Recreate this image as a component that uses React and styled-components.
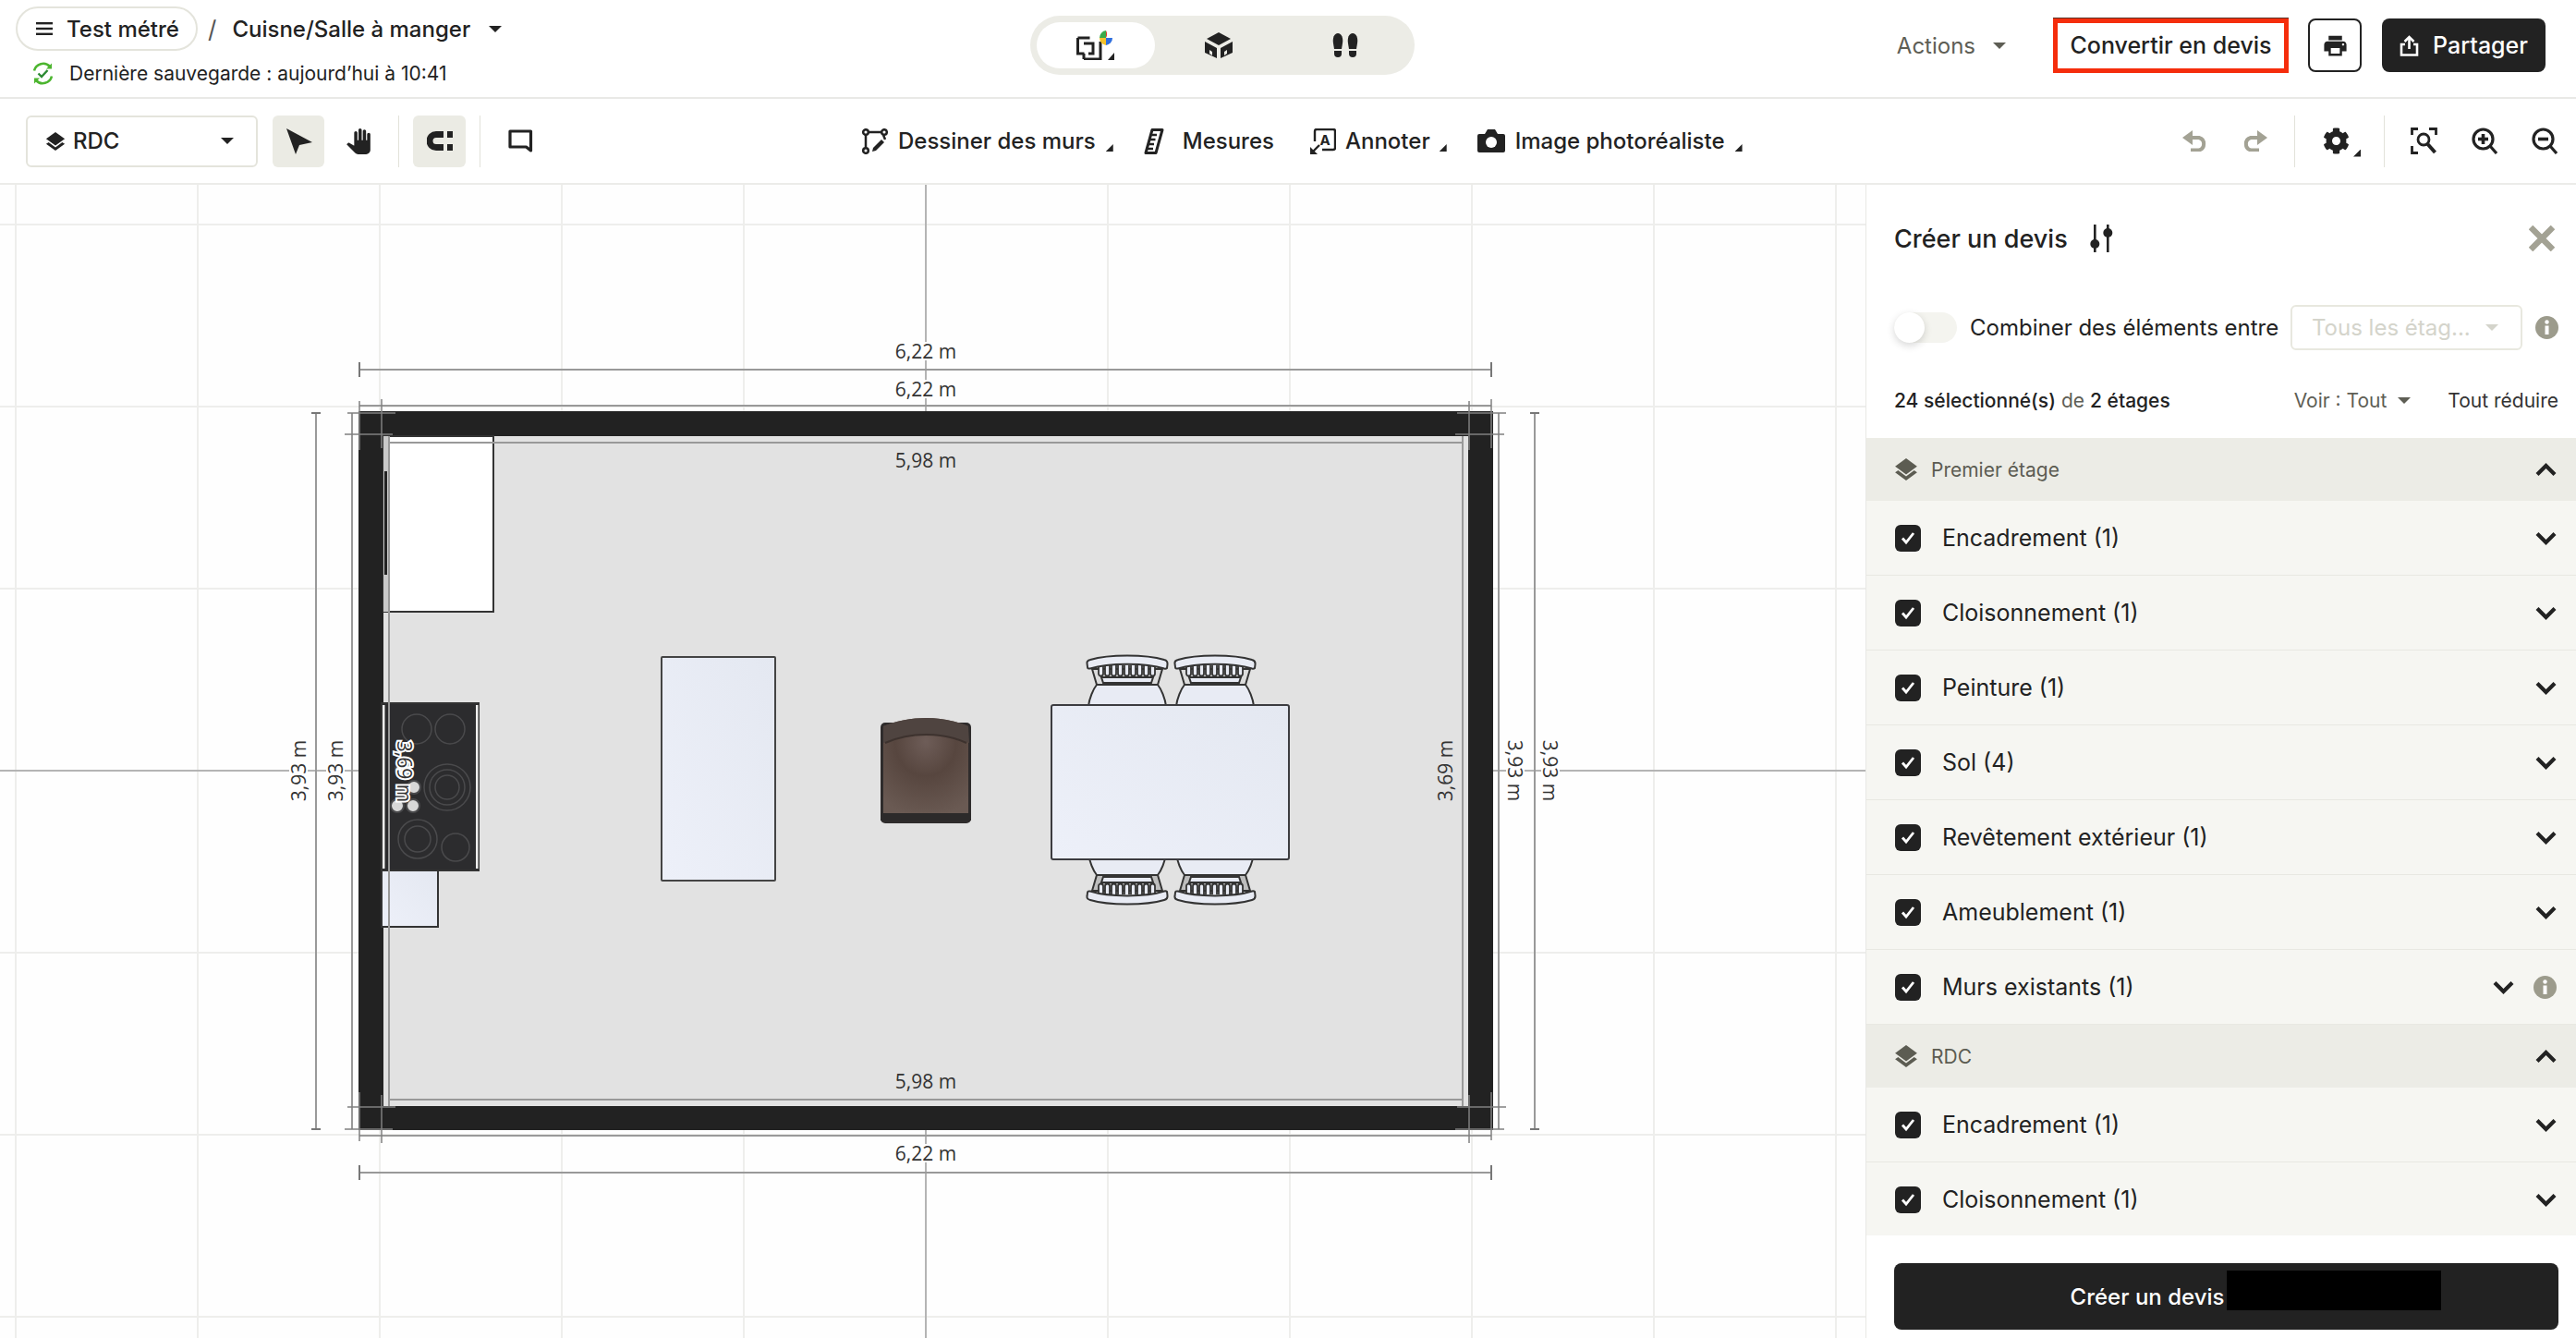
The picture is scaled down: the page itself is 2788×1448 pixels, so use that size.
import React from 'react';
import styled, { createGlobalStyle } from 'styled-components';
import { FaCog } from 'react-icons/fa';
import { MdPanTool, MdPrint } from 'react-icons/md';

const GlobalStyle = createGlobalStyle`
  html, body {
    margin: 0;
    padding: 0;
    background: #fff;
  }
  * {
    box-sizing: border-box;
  }
`;

const Page = styled.div`
  width: 2788px;
  height: 1448px;
  display: flex;
  flex-direction: column;
  overflow: hidden;
  color: #222;
  font-family: Inter, "Noto Sans", sans-serif;
  background: #fff;
`;

/* ---------- top header ---------- */

const Header = styled.header`
  height: 107px;
  flex: none;
  display: grid;
  grid-template-columns: 1115px 416px 1fr;
  align-items: start;
  border-bottom: 2px solid #e9e9e6;
`;

const TitleColumn = styled.div`
  display: flex;
  flex-direction: column;
  padding: 7px 0 0 17px;
`;

const TitleRow = styled.div`
  display: flex;
  align-items: center;
  height: 48px;
`;

const ProjectPill = styled.div`
  width: 197px;
  height: 48px;
  display: flex;
  align-items: center;
  gap: 15px;
  padding-left: 20px;
  border: 2px solid #e4e4dc;
  border-radius: 24px;
  font-size: 24px;
  font-weight: 500;
  white-space: nowrap;
`;

const Slash = styled.span`
  margin: 0 17px 0 11px;
  color: #555;
  font-size: 26px;
`;

const RoomName = styled.span`
  font-size: 24px;
  font-weight: 500;
  white-space: nowrap;
`;

const Caret = styled.span`
  flex: none;
  display: inline-block;
  width: 0;
  height: 0;
  margin-left: ${(p) => p.$left || 0}px;
  border-left: 7px solid transparent;
  border-right: 7px solid transparent;
  border-top: 7px solid ${(p) => p.$color || '#222'};
`;

const SaveRow = styled.div`
  display: flex;
  align-items: center;
  gap: 16px;
  height: 26px;
  margin-top: 11px;
  padding-left: 17px;
  font-size: 21px;
  white-space: nowrap;
`;

const ViewSwitch = styled.div`
  margin-top: 17px;
  width: 416px;
  height: 64px;
  padding: 7px;
  display: grid;
  grid-template-columns: 128px 1fr 1fr;
  background: #ecece6;
  border-radius: 32px;
`;

const ViewOption = styled.div`
  display: flex;
  align-items: center;
  justify-content: center;
  height: 50px;
  border-radius: 25px;
  background: ${(p) => (p.$active ? '#fff' : 'transparent')};
`;

const HeaderActions = styled.div`
  display: flex;
  align-items: center;
  justify-content: flex-end;
  height: 98px;
  padding-right: 33px;
`;

const ActionsMenu = styled.div`
  display: flex;
  align-items: center;
  gap: 19px;
  margin-right: 51px;
  color: #5e5e55;
  font-size: 24px;
`;

const ConvertButton = styled.div`
  width: 255px;
  height: 59px;
  display: flex;
  align-items: center;
  justify-content: center;
  margin-right: 21px;
  border: 5px solid #f52d0c;
  box-shadow: 0 -1px 0 #5a3126;
  font-size: 25px;
  font-weight: 500;
  white-space: nowrap;
`;

const PrintButton = styled.div`
  width: 58px;
  height: 58px;
  display: flex;
  align-items: center;
  justify-content: center;
  margin-right: 22px;
  border: 2px solid #222;
  border-radius: 8px;
  font-size: 29px;
`;

const ShareButton = styled.div`
  width: 177px;
  height: 58px;
  display: flex;
  align-items: center;
  justify-content: center;
  gap: 15px;
  border-radius: 8px;
  background: #222;
  color: #fff;
  font-size: 25px;
  font-weight: 500;
`;

/* ---------- tool bar ---------- */

const Toolbar = styled.div`
  height: 93px;
  flex: none;
  display: grid;
  grid-template-columns: 933px 1fr auto;
  align-items: center;
  border-bottom: 2px solid #ecece9;
`;

const ToolsLeft = styled.div`
  display: flex;
  align-items: center;
  gap: 15px;
  padding-left: 28px;
`;

const FloorSelect = styled.div`
  width: 251px;
  height: 56px;
  display: flex;
  align-items: center;
  gap: 8px;
  margin-right: 1px;
  padding: 0 24px 0 19px;
  border: 2px solid #e4e4dc;
  border-radius: 6px;
  font-size: 24px;
  font-weight: 500;
`;

const SelectText = styled.span`
  flex: 1;
`;

const ToolButton = styled.div`
  width: ${(p) => p.$w || 56}px;
  height: 56px;
  flex: none;
  display: flex;
  align-items: center;
  justify-content: center;
  border-radius: 6px;
  background: ${(p) => (p.$active ? '#ebebe4' : 'transparent')};
  color: ${(p) => p.$color || '#222'};
  font-size: 28px;
`;

const Pair = styled.div`
  display: flex;
  gap: 9px;
`;

const Sep = styled.div`
  width: 1px;
  height: 56px;
  flex: none;
  background: #e2e2da;
`;

const ToolsCenter = styled.div`
  display: flex;
  align-items: center;
  gap: 33px;
`;

const ToolItem = styled.div`
  display: flex;
  align-items: center;
  gap: ${(p) => p.$gap || 11}px;
  margin-right: ${(p) => p.$after || 0}px;
  font-size: 24px;
  font-weight: 500;
  white-space: nowrap;
`;

const CornerMark = styled.span`
  flex: none;
  align-self: flex-end;
  width: 8px;
  height: 8px;
  margin-bottom: ${(p) => p.$bottom || 0}px;
  background: #222;
  clip-path: polygon(100% 0, 100% 100%, 0 100%);
`;

const ToolsRight = styled.div`
  display: flex;
  align-items: center;
  gap: 21px;
  padding-right: 12px;
`;

const GearWrap = styled.div`
  width: 54px;
  height: 56px;
  display: flex;
  align-items: center;
  padding-left: 9px;
  font-size: 29px;
  position: relative;
`;

const GearMark = styled(CornerMark)`
  position: absolute;
  right: 4px;
  bottom: 11px;
`;

/* ---------- body ---------- */

const Body = styled.div`
  flex: 1;
  min-height: 0;
  display: flex;
`;

const Canvas = styled.svg`
  width: 2019px;
  height: 1248px;
  flex: none;
  display: block;
  background: #fefefe;

  text {
    font-family: "Open Sans", sans-serif;
    font-size: 21px;
    fill: #333;
  }
`;

const Panel = styled.aside`
  flex: 1;
  display: flex;
  flex-direction: column;
  border-left: 1px solid #e8e8e5;
  background: #fff;
`;

const PanelHead = styled.div`
  height: 274px;
  flex: none;
  padding: 0 19px 0 30px;
`;

const TitleBar = styled.div`
  height: 116px;
  display: flex;
  align-items: center;
  gap: 24px;
`;

const PanelTitle = styled.h2`
  margin: 0;
  font-size: 27px;
  font-weight: 500;
  white-space: nowrap;
`;

const CloseIcon = styled.svg`
  margin-left: auto;
  margin-right: 4px;
`;

const CombineRow = styled.div`
  height: 76px;
  display: flex;
  align-items: center;
`;

const Toggle = styled.div`
  width: 68px;
  height: 33px;
  flex: none;
  position: relative;
  margin-right: 14px;
  border-radius: 17px;
  background: #f4f4ef;
`;

const Knob = styled.span`
  position: absolute;
  left: 0;
  top: 0;
  width: 33px;
  height: 33px;
  border-radius: 50%;
  background: #fff;
  box-shadow: 0 3px 8px rgba(0, 0, 0, 0.16);
`;

const CombineLabel = styled.div`
  width: 347px;
  flex: none;
  font-size: 24px;
  line-height: 37px;
`;

const DisabledSelect = styled.div`
  width: 251px;
  height: 49px;
  flex: none;
  display: flex;
  align-items: center;
  justify-content: space-between;
  padding: 0 24px 0 21px;
  border: 2px solid #e8e8df;
  border-radius: 6px;
  color: #d4d4cb;
  font-size: 24px;
  white-space: nowrap;
`;

const InfoWrap = styled.span`
  display: flex;
  margin-left: ${(p) => p.$left || 0}px;
`;

const SummaryRow = styled.div`
  height: 82px;
  display: flex;
  align-items: center;
  font-size: 21px;
  font-weight: 500;
  white-space: nowrap;
`;

const SummaryMuted = styled.span`
  margin: 0 6px;
  color: #5e5e55;
  font-weight: 400;
`;

const SummaryLinks = styled.div`
  margin-left: auto;
  display: flex;
  align-items: center;
  color: #5e5e55;
  font-weight: 400;
`;

const CollapseLink = styled.span`
  margin-left: 40px;
  color: #333;
`;

const List = styled.div`
  flex: 1;
  min-height: 0;
  overflow: hidden;
  background: #f6f6f2;
`;

const GroupHeader = styled.div`
  height: 68px;
  display: flex;
  align-items: center;
  padding: 0 21px 0 30px;
  background: #ecece6;
  color: #5c5c52;
  font-size: 21px;
`;

const GroupName = styled.span`
  flex: 1;
  margin-left: 14px;
`;

const Row = styled.div`
  height: 81px;
  display: flex;
  align-items: center;
  padding: 0 21px 0 31px;
  border-bottom: 1px solid #e8e8e2;
  font-size: 25px;
`;

const Check = styled.span`
  width: 28px;
  height: 29px;
  flex: none;
  display: flex;
  align-items: center;
  justify-content: center;
  margin-right: 23px;
  border-radius: 6px;
  background: #222;
`;

const RowLabel = styled.span`
  flex: 1;
  white-space: nowrap;
`;

const Footer = styled.div`
  height: 111px;
  flex: none;
  padding: 30px 19px 0 30px;
`;

const CreateButton = styled.div`
  height: 72px;
  position: relative;
  display: flex;
  align-items: center;
  justify-content: center;
  border-radius: 8px;
  background: #222;
  color: #fff;
  font-size: 24px;
  font-weight: 500;
`;

const CreateLabel = styled.span`
  position: relative;
  padding-right: 171px;
`;

const Redaction = styled.span`
  position: absolute;
  left: 169px;
  top: -14px;
  width: 232px;
  height: 43px;
  background: #000;
`;

/* ---------- icons ---------- */

const Burger = () => (
  <svg width="18" height="14" viewBox="0 0 18 14" fill="#222">
    <rect width="18" height="2.4" />
    <rect y="5.8" width="18" height="2.4" />
    <rect y="11.6" width="18" height="2.4" />
  </svg>
);

const SavedIcon = () => (
  <svg width="25" height="25" viewBox="0 0 25 25" fill="none">
    <path d="M3 9.5A10 10 0 0 1 20 5" stroke="#4cb52f" strokeWidth="2.6" />
    <path d="M22 1.5v6h-6z" fill="#4cb52f" />
    <path d="M22 15.5A10 10 0 0 1 5 20" stroke="#4cb52f" strokeWidth="2.6" />
    <path d="M3 23.5v-6h6z" fill="#4cb52f" />
    <path d="M7.5 12.5l3.5 3.5 6.5-7" stroke="#2c8a33" strokeWidth="2.4" />
  </svg>
);

const LayersIcon = ({ color = '#222', size = 22 }) => (
  <svg width={size} height={size} viewBox="0 0 24 24" fill={color}>
    <path d="M12 1l11 8-11 8L1 9z" />
    <path d="M1 15l3-2 8 6 8-6 3 2-11 8z" />
  </svg>
);

const CursorIcon = () => (
  <svg width="29" height="28" viewBox="0 0 29 28" fill="#222">
    <path d="M1 0l28 15-14 3-4 10z" />
  </svg>
);

const MagnetIcon = () => (
  <svg width="28" height="21" viewBox="0 0 28 21" fill="none">
    <path d="M18 3.5h-8a7 7 0 0 0 0 14h8" stroke="#222" strokeWidth="7" />
    <rect x="22" width="6" height="7" fill="#222" />
    <rect x="22" y="14" width="6" height="7" fill="#222" />
  </svg>
);

const CommentIcon = () => (
  <svg width="28" height="26" viewBox="0 0 28 26" fill="none">
    <path d="M3 2h22.500v21l-5-4H3z" stroke="#222" strokeWidth="3.2" strokeLinejoin="round" />
  </svg>
);

const WallsIcon = () => (
  <svg width="28" height="28" viewBox="0 0 28 28" fill="none" stroke="#222" strokeWidth="2.5">
    <circle cx="4" cy="4" r="2.800" />
    <circle cx="24" cy="4" r="2.800" />
    <circle cx="4" cy="24" r="2.800" />
    <path d="M7 4h14M4 7v14M23 7l2 5" />
    <path d="M11 25l1-4 9-9 3 3-9 9z" fill="#222" stroke="none" />
  </svg>
);

const RulerIcon = () => (
  <svg width="22" height="28" viewBox="0 0 22 28" fill="none">
    <path d="M9 1.500h11L13 26.500H2z" stroke="#222" strokeWidth="3" strokeLinejoin="round" />
    <path d="M7 7h7M5.500 12h7M4 17h7M3 22h7" stroke="#222" strokeWidth="2.500" />
  </svg>
);

const AnnotateGlyph = styled.text`
  font-family: Inter, sans-serif;
  font-size: 15px;
  font-weight: 700;
  fill: #222;
`;

const AnnotateIcon = () => (
  <svg width="28" height="28" viewBox="0 0 28 28" fill="none">
    <path d="M5 14V3a2 2 0 0 1 2-2h18a2 2 0 0 1 2 2v18a2 2 0 0 1-2 2H13" stroke="#222" strokeWidth="2.400" />
    <AnnotateGlyph x="16" y="18" textAnchor="middle">A</AnnotateGlyph>
    <path d="M10 18l-7 7" stroke="#222" strokeWidth="2.400" />
    <path d="M0 28v-8l8 8z" fill="#222" />
  </svg>
);

const CameraIcon = () => (
  <svg width="30" height="25" viewBox="0 0 30 25">
    <path d="M2 5h6l3-5h8l3 5h6a2 2 0 0 1 2 2v16a2 2 0 0 1-2 2H2a2 2 0 0 1-2-2V7a2 2 0 0 1 2-2z" fill="#222" />
    <circle cx="15" cy="14" r="6" fill="#fff" />
  </svg>
);

const PlanIcon = () => (
  <svg width="42" height="32" viewBox="0 0 42 32" fill="none">
    <path d="M1.500 8h13M1.500 8v17h7M8 31h18V12M8 25v6M8 14h10v11h-5" stroke="#222" strokeWidth="3" />
    <path d="M32 0a8 8 0 0 1 0 8z" fill="#e23b2e" />
    <path d="M32 0a8 8 0 0 0-7 8h7z" fill="#3bab4a" />
    <path d="M25 8a8 8 0 0 0 7 8V8z" fill="#f4c22b" />
    <path d="M32 8v8a8 8 0 0 0 7-8z" fill="#2f6fde" />
    <path d="M41 24v8h-7z" fill="#222" />
  </svg>
);

const BoxIcon = () => (
  <svg width="32" height="28" viewBox="0 0 32 28" fill="#222">
    <path d="M16 0l13 7-13 7-13-7z" />
    <path d="M1 10l13 7v11L1 22zM31 10L18 17v11l13-6z" />
    <path d="M6 19l3 2v4l-3-2zM25 19l-3 2v4l3-2z" fill="#ecece6" />
  </svg>
);

const StepsIcon = () => (
  <svg width="30" height="27" viewBox="0 0 30 27" fill="#222">
    <path d="M7 0c4 0 6 5 5 11l-1 6H3l-1-6C1 5 3 0 7 0z" />
    <path d="M3 19h8v3a4 4 0 0 1-8 0z" />
    <path d="M23 0c-4 0-6 5-5 11l1 6h8l1-6c1-6-1-11-5-11z" />
    <path d="M19 19h8v3a4 4 0 0 1-8 0z" />
  </svg>
);

const ShareIcon = () => (
  <svg width="21" height="23" viewBox="0 0 21 23" fill="none" stroke="#fff" strokeWidth="2.600">
    <path d="M6 10H2v11.500h17V10h-4" />
    <path d="M10.500 15V3" />
    <path d="M5.500 7l5-5 5 5" />
  </svg>
);

const UndoIcon = ({ flip }) => (
  <svg width="27" height="23" viewBox="0 0 27 23" fill="none" style={flip ? { transform: 'scaleX(-1)' } : undefined}>
    <path d="M0 8L11 0v16z" fill="#a3a294" />
    <path d="M9 8h9a7 7 0 0 1 0 13.500H9" stroke="#a3a294" strokeWidth="4" />
  </svg>
);

const FocusIcon = () => (
  <svg width="30" height="29" viewBox="0 0 30 29" fill="none" stroke="#222" strokeWidth="2.800">
    <path d="M1.500 8V1.500H8M20 1.500h7.500V8M1.500 20v7.500H8" />
    <circle cx="14" cy="13" r="6" />
    <path d="M18.500 18l8 9" strokeWidth="4" />
  </svg>
);

const ZoomIcon = ({ minus }) => (
  <svg width="28" height="29" viewBox="0 0 28 29" fill="none" stroke="#222" strokeWidth="3.200">
    <circle cx="12.500" cy="12.500" r="10.500" />
    <path d="M20 20l7 8" />
    <path d="M7 12.500h11" strokeWidth="3.600" />
    {!minus && <path d="M12.500 7v11" strokeWidth="3.600" />}
  </svg>
);

const FilterIcon = () => (
  <svg width="25" height="30" viewBox="0 0 25 30" fill="#222">
    <rect x="4" width="2.600" height="30" />
    <rect x="18" width="2.600" height="30" />
    <circle cx="5.300" cy="21" r="5" />
    <circle cx="19.300" cy="9" r="5" />
  </svg>
);

const InfoIcon = ({ size = 25 }) => (
  <svg width={size} height={size} viewBox="0 0 25 25">
    <circle cx="12.500" cy="12.500" r="12.500" fill="#9c9b8c" />
    <circle cx="12.500" cy="6.500" r="2.200" fill="#fff" />
    <rect x="10.500" y="10.500" width="4" height="9.500" fill="#fff" />
  </svg>
);

const Chevron = ({ up }) => (
  <svg width="23" height="15" viewBox="0 0 23 15" fill="none" stroke="#222" strokeWidth="4.200" style={up ? { transform: 'scaleY(-1)' } : undefined}>
    <path d="M2 2.500l9.500 9.500L21 2.500" />
  </svg>
);

const Tick = () => (
  <svg width="16" height="16" viewBox="0 0 16 16" fill="none" stroke="#fff" strokeWidth="2.800">
    <path d="M2 8.500l4 4.500 8-10" />
  </svg>
);

/* ---------- floor plan ---------- */

const VX = [17, 214, 411, 608, 805, 1199, 1396, 1593, 1790, 1987];
const HY = [243, 440, 637, 1031, 1228, 1425];

const DimH = ({ y, x1, x2, tick = 8 }) => (
  <g stroke="#999" strokeWidth="2">
    <path d={`M${x1} ${y}H${x2}`} />
    <path d={`M${x1} ${y - tick}v${tick * 2}M${x2} ${y - tick}v${tick * 2}`} stroke="#777" />
  </g>
);

const DimV = ({ x, y1, y2, tick = 8 }) => (
  <g stroke="#999" strokeWidth="2">
    <path d={`M${x} ${y1}V${y2}`} />
    <path d={`M${x - tick} ${y1}h${tick * 2}M${x - tick} ${y2}h${tick * 2}`} stroke="#777" />
  </g>
);

const Dim = ({ x, y, rot = 0, plate, color, stroke, children }) => (
  <g transform={`translate(${x} ${y}) rotate(${rot})`}>
    {plate && <rect x="-37" y="-10" width="74" height="20" fill="#fefefe" />}
    <text
      textAnchor="middle"
      dominantBaseline="central"
      style={stroke ? { stroke, strokeWidth: 4, paintOrder: 'stroke', fill: color } : undefined}
    >
      {children}
    </text>
  </g>
);

const DiningChair = ({ x, y, flip }) => (
  <g transform={`translate(${x} ${y}) scale(1 ${flip ? -1 : 1})`} stroke="#333" strokeWidth="2" fill="#e8ebf4">
    <path d="M-33 31C-37 36-41 46-42 54H42C41 46 37 36 33 31Z" />
    <path d="M-38 14L-33 31H33L38 14Z" fill={flip ? '#bdbdbd' : '#dcdcdc'} />
    <path d="M-28 23H28L26 29H-26Z" fill="#e8ebf4" />
    {Array.from({ length: 9 }).map((_, i) => (
      <path key={i} d={`M${-31 + i * 7} 10V19a2.500 2.500 0 0 0 5 0V10`} fill="#e8ebf4" strokeWidth="1.800" />
    ))}
    <path d="M-40 4C-20-2 20-2 40 4Q44 5 43.500 9L43 13Q42 14 40 13.500C20 7 -20 7 -40 13.500Q-43 14-43 12L-43.500 8Q-44 5-40 4Z" />
  </g>
);

const FloorPlan = () => (
  <Canvas viewBox="0 200 2019 1248">
    <defs>
      <linearGradient id="top" x1="0" y1="1" x2="1" y2="0">
        <stop offset="0" stopColor="#edf0f9" />
        <stop offset="1" stopColor="#e4e8f1" />
      </linearGradient>
      <radialGradient id="leather" cx="0.500" cy="0.250" r="0.800">
        <stop offset="0" stopColor="#6e5d58" />
        <stop offset="0.450" stopColor="#57463f" />
        <stop offset="1" stopColor="#6a5a53" />
      </radialGradient>
    </defs>

    <g stroke="#eeeeec" strokeWidth="2">
      {VX.map((x) => <path key={x} d={`M${x} 200V1448`} />)}
      {HY.map((y) => <path key={y} d={`M0 ${y}H2019`} />)}
    </g>
    <g stroke="#b4b4b4" strokeWidth="2">
      <path d="M1002 200V1448" />
      <path d="M0 834H2019" />
    </g>

    <path d="M388 445H1616V1223H388Z" fill="#e2e2e2" />
    <path fillRule="evenodd" d="M388 445H1616V1223H388ZM415 472V1197H1589V472Z" fill="#222" />

    <path d="M415 472H534V662H415Z" fill="#fff" stroke="#333" strokeWidth="2" />
    <rect x="415" y="472" width="5" height="190" fill="#c9c9c9" />
    <rect x="416" y="510" width="3" height="112" fill="#222" />

    <path d="M413 761H518V942H413Z" fill="#2c2c2e" stroke="#333" strokeWidth="2" />
    <rect x="414" y="763" width="2.500" height="177" fill="#eee" />
    <rect x="515" y="763" width="2.500" height="177" fill="#eee" />
    <g fill="none" stroke="#4a4a4c" strokeWidth="1.500">
      <circle cx="451" cy="789" r="16" />
      <circle cx="487" cy="789" r="16" />
      <circle cx="484" cy="852" r="25" />
      <circle cx="484" cy="852" r="19" />
      <circle cx="484" cy="852" r="13" />
      <circle cx="452" cy="908" r="21" />
      <circle cx="452" cy="908" r="14" />
      <circle cx="493" cy="917" r="15" />
    </g>
    <g fill="#d8d8d8" stroke="#4a4a4c" strokeWidth="2">
      <circle cx="436" cy="833" r="8" />
      <circle cx="448" cy="852" r="7" />
      <circle cx="430" cy="872" r="7" />
      <circle cx="447" cy="872" r="7" />
    </g>

    <path d="M413 942H474V1003H413Z" fill="url(#top)" stroke="#333" strokeWidth="2" />

    <rect x="716" y="711" width="123" height="242" fill="url(#top)" stroke="#444" strokeWidth="2" rx="1" />

    <rect x="953" y="782" width="98" height="109" rx="5" fill="#2f2c2c" />
    <path d="M956 786C985 774 1020 774 1048 786V880H956Z" fill="url(#leather)" />
    <path d="M956 786C985 774 1020 774 1048 786L1049 804C1020 792 985 792 956 804Z" fill="#4f4440" />
    <path d="M958 804C985 792 1020 792 1046 804" fill="none" stroke="#3d322e" strokeWidth="2" />
    <rect x="953" y="880" width="98" height="8" fill="#2c2a2a" />

    <DiningChair x={1220} y={710} />
    <DiningChair x={1315} y={710} />
    <DiningChair x={1220} y={978} flip />
    <DiningChair x={1315} y={978} flip />
    <rect x="1138" y="763" width="257" height="167" rx="2" fill="url(#top)" stroke="#3c3c40" strokeWidth="2" />

    <DimH y={400} x1={389} x2={1614} />
    <DimH y={439} x1={389} x2={1614} tick={0} />
    <DimH y={479} x1={421} x2={1583} tick={0} />
    <DimH y={1190} x1={421} x2={1583} tick={0} />
    <DimH y={1229} x1={389} x2={1614} tick={0} />
    <DimH y={1269} x1={389} x2={1614} />
    <DimV x={342} y1={447} y2={1222} tick={5} />
    <DimV x={381} y1={447} y2={1222} tick={0} />
    <DimV x={421} y1={472} y2={1197} tick={0} />
    <DimV x={1583} y1={472} y2={1197} tick={0} />
    <DimV x={1622} y1={447} y2={1222} tick={0} />
    <DimV x={1661} y1={447} y2={1222} tick={5} />

    <path
      d="M389 434V487M413 432V485M376 447H428M373 470H425M1590 434V487M1614 432V485M1577 447H1630M1575 470H1628M389 1182V1235M413 1185V1237M376 1198H428M373 1222H425M1590 1185V1237M1614 1182V1234M1577 1198H1630M1575 1222H1628"
      stroke="#808080"
      strokeWidth="1.500"
      fill="none"
    />

    <Dim x={1002} y={380} plate>6,22 m</Dim>
    <Dim x={1002} y={421} plate>6,22 m</Dim>
    <Dim x={1002} y={498}>5,98 m</Dim>
    <Dim x={1002} y={1170}>5,98 m</Dim>
    <Dim x={1002} y={1248} plate>6,22 m</Dim>
    <Dim x={323} y={834} rot={-90} plate>3,93 m</Dim>
    <Dim x={363} y={834} rot={-90} plate>3,93 m</Dim>
    <Dim x={1564} y={834} rot={-90}>3,69 m</Dim>
    <Dim x={1640} y={834} rot={90} plate>3,93 m</Dim>
    <Dim x={1678} y={834} rot={90} plate>3,93 m</Dim>
    <Dim x={438} y={835} rot={90} color="#333" stroke="#fff">3,69 m</Dim>
  </Canvas>
);

/* ---------- panel data ---------- */

const upperFloor = ['Encadrement (1)', 'Cloisonnement (1)', 'Peinture (1)', 'Sol (4)', 'Revêtement extérieur (1)', 'Ameublement (1)'];
const groundFloor = ['Encadrement (1)', 'Cloisonnement (1)'];

const ItemRow = ({ label, info }) => (
  <Row>
    <Check><Tick /></Check>
    <RowLabel>{label}</RowLabel>
    <Chevron />
    {info && <InfoWrap $left={21}><InfoIcon /></InfoWrap>}
  </Row>
);

const FloorHeader = ({ name }) => (
  <GroupHeader>
    <LayersIcon color="#5c5c52" size={26} />
    <GroupName>{name}</GroupName>
    <Chevron up />
  </GroupHeader>
);

const App = () => (
  <Page>
    <GlobalStyle />
    <Header>
      <TitleColumn>
        <TitleRow>
          <ProjectPill><Burger />Test métré</ProjectPill>
          <Slash>/</Slash>
          <RoomName>Cuisne/Salle à manger</RoomName>
          <Caret $left={20} />
        </TitleRow>
        <SaveRow><SavedIcon />Dernière sauvegarde : aujourd’hui à 10:41</SaveRow>
      </TitleColumn>
      <ViewSwitch>
        <ViewOption $active><PlanIcon /></ViewOption>
        <ViewOption><BoxIcon /></ViewOption>
        <ViewOption><StepsIcon /></ViewOption>
      </ViewSwitch>
      <HeaderActions>
        <ActionsMenu>Actions<Caret $color="#5e5e55" /></ActionsMenu>
        <ConvertButton>Convertir en devis</ConvertButton>
        <PrintButton><MdPrint /></PrintButton>
        <ShareButton><ShareIcon />Partager</ShareButton>
      </HeaderActions>
    </Header>

    <Toolbar>
      <ToolsLeft>
        <FloorSelect>
          <LayersIcon />
          <SelectText>RDC</SelectText>
          <Caret />
        </FloorSelect>
        <Pair>
          <ToolButton $active><CursorIcon /></ToolButton>
          <ToolButton><MdPanTool /></ToolButton>
        </Pair>
        <Sep />
        <ToolButton $active $w={57}><MagnetIcon /></ToolButton>
        <Sep />
        <ToolButton><CommentIcon /></ToolButton>
      </ToolsLeft>
      <ToolsCenter>
        <ToolItem><WallsIcon />Dessiner des murs<CornerMark $bottom={3} /></ToolItem>
        <ToolItem $gap={20} $after={6}><RulerIcon />Mesures</ToolItem>
        <ToolItem $gap={10}><AnnotateIcon />Annoter<CornerMark $bottom={3} /></ToolItem>
        <ToolItem><CameraIcon />Image photoréaliste<CornerMark $bottom={3} /></ToolItem>
      </ToolsCenter>
      <ToolsRight>
        <ToolButton $w={44}><UndoIcon /></ToolButton>
        <ToolButton $w={44}><UndoIcon flip /></ToolButton>
        <Sep />
        <GearWrap><FaCog /><GearMark /></GearWrap>
        <Sep />
        <ToolButton $w={44}><FocusIcon /></ToolButton>
        <ToolButton $w={44}><ZoomIcon /></ToolButton>
        <ToolButton $w={44}><ZoomIcon minus /></ToolButton>
      </ToolsRight>
    </Toolbar>

    <Body>
      <FloorPlan />
      <Panel>
        <PanelHead>
          <TitleBar>
            <PanelTitle>Créer un devis</PanelTitle>
            <FilterIcon />
            <CloseIcon width="28" height="28" viewBox="0 0 28 28" stroke="#a3a294" strokeWidth="6.500">
              <path d="M2 2l24 24M26 2L2 26" />
            </CloseIcon>
          </TitleBar>
          <CombineRow>
            <Toggle><Knob /></Toggle>
            <CombineLabel>Combiner des éléments entre</CombineLabel>
            <DisabledSelect>Tous les étag...<Caret $color="#d4d4cb" /></DisabledSelect>
            <InfoWrap $left={14}><InfoIcon /></InfoWrap>
          </CombineRow>
          <SummaryRow>
            24 sélectionné(s)<SummaryMuted>de</SummaryMuted>2 étages
            <SummaryLinks>
              Voir : Tout<Caret $left={12} $color="#5e5e55" />
              <CollapseLink>Tout réduire</CollapseLink>
            </SummaryLinks>
          </SummaryRow>
        </PanelHead>
        <List>
          <FloorHeader name="Premier étage" />
          {upperFloor.map((label) => <ItemRow key={label} label={label} />)}
          <ItemRow label="Murs existants (1)" info />
          <FloorHeader name="RDC" />
          {groundFloor.map((label) => <ItemRow key={label} label={label} />)}
        </List>
        <Footer>
          <CreateButton>
            <CreateLabel>Créer un devis<Redaction /></CreateLabel>
          </CreateButton>
        </Footer>
      </Panel>
    </Body>
  </Page>
);

export default App;
